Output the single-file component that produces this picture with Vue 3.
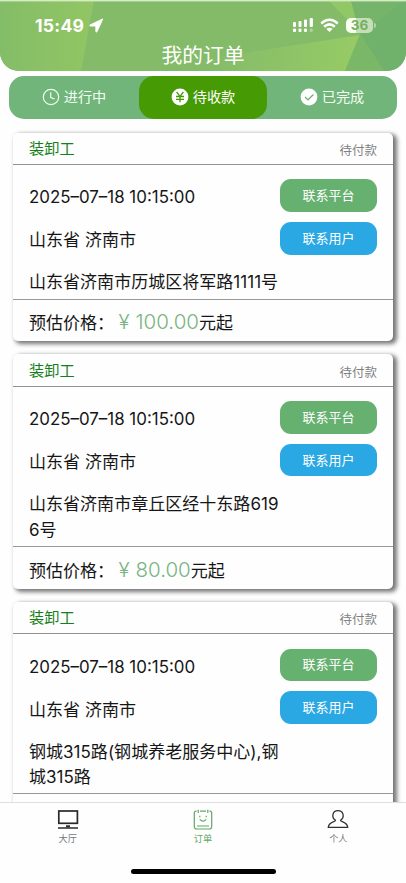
<script setup>
const orders = [
  { address: ['山东省济南市历城区将军路1111号'], price: '100.00' },
  { address: ['山东省济南市章丘区经十东路619', '6号'], price: '80.00' },
  { address: ['钢城315路(钢城养老服务中心),钢', '城315路'], price: '' },
]
</script>

<template>
  <div class="page">
    <header class="hero">
      <svg class="hero-bg" viewBox="0 0 406 71" preserveAspectRatio="none">
        <defs>
          <linearGradient id="leaf" x1="0" y1="0" x2="1" y2="0">
            <stop offset="0" stop-color="#84bd68" />
            <stop offset="1" stop-color="#92c663" />
          </linearGradient>
          <linearGradient id="ray" x1="0" y1="0" x2="1" y2="0">
            <stop offset="0" stop-color="#84bb69" />
            <stop offset="1" stop-color="#96cb65" />
          </linearGradient>
        </defs>
        <rect width="406" height="71" fill="#84bb69" />
        <path d="M0 0H94L81 71H0Z" fill="url(#leaf)" />
        <path d="M250 52L360 35L345 71H203V59Z" fill="url(#ray)" />
        <path d="M328 0H351L360 33Z" fill="#92c766" />
        <path d="M351 0H406V71H384L360 34Z" fill="#70b16b" />
        <path d="M351 0H406L360 34Z" fill="#75b46a" />
        <path d="M360 34L384 71H345Z" fill="#7ab867" />
        <rect width="406" height="1.4" fill="#d4edc4" />
      </svg>
      <div class="status">
        <div class="clock">
          <span class="time">15:49</span>
          <svg width="15" height="15" viewBox="0 0 15 15"><path d="M13.8.9L1 7Q.4 7.7 1.2 8H6.9V13.6Q7.3 14.6 7.9 13.8Z" fill="#fff" stroke="#fff" stroke-width="1" stroke-linejoin="round" /></svg>
        </div>
        <div class="signals">
          <svg width="22" height="16" viewBox="0 0 22 16" fill="#fff">
            <rect x="1" y="5" width="3" height="5" rx="1" /><rect x="6.5" y="4" width="3" height="6" rx="1" />
            <rect x="12" y="2.5" width="3" height="7.5" rx="1" /><rect x="17.7" y="1" width="3.2" height="9" rx="1" />
            <rect x="1" y="11.5" width="3" height="3.5" rx="1" /><rect x="6.5" y="11.5" width="3" height="3.5" rx="1" />
            <rect x="12" y="11.5" width="3" height="3.5" rx="1" /><rect x="17.7" y="11.5" width="3" height="3.5" rx="1" opacity=".35" />
          </svg>
          <svg width="19" height="15" viewBox="0 0 19 15" fill="none" stroke="#fff" stroke-width="2.5">
            <path d="M1.2 5.5Q9.5-1.9 17.8 5.5M4.1 8.8Q9.5 4 14.9 8.8" /><path d="M9.5 14L6.4 11Q9.5 8.5 12.6 11Z" fill="#fff" stroke="none" />
          </svg>
          <div class="battery"><span>36</span></div>
          <i class="battery-tip"></i>
        </div>
      </div>
      <h1>我的订单</h1>
    </header>

    <nav class="filters">
      <div class="filter">
        <svg width="18" height="18" viewBox="0 0 18 18" fill="none" stroke="#f2fff2" stroke-width="1.2"><circle cx="9" cy="9" r="7.7" /><path d="M8.7 4.2V9.6L12.6 11" /></svg>
        <span>进行中</span>
      </div>
      <div class="filter active">
        <svg width="18" height="18" viewBox="0 0 18 18"><circle cx="9" cy="9" r="8.4" fill="#fff" /><path d="M5.6 4L9 8.3L12.4 4M5 8.5H13M5 11.3H13M9 8.3V14.3" fill="none" stroke="#469a04" stroke-width="1.3" /></svg>
        <span>待收款</span>
      </div>
      <div class="filter">
        <svg width="18" height="18" viewBox="0 0 18 18"><circle cx="9" cy="9" r="8.4" fill="#fff" /><path d="M5 9L8 11.9L13.4 6.5" fill="none" stroke="#75ac78" stroke-width="1.3" /></svg>
        <span>已完成</span>
      </div>
    </nav>

    <main class="orders">
      <article v-for="(order, i) in orders" :key="i" class="card">
        <div class="card-head"><span class="job">装卸工</span><span class="state">待付款</span></div>
        <div class="card-body">
          <div class="details">
            <p class="date">2025–07–18 10:15:00</p>
            <p class="region">山东省 济南市</p>
            <p class="address"><span v-for="line in order.address" :key="line">{{ line }}</span></p>
          </div>
          <div class="actions"><button class="platform">联系平台</button><button class="user">联系用户</button></div>
        </div>
        <div class="card-foot">
          <template v-if="order.price"><span class="label">预估价格：</span><span class="yen">¥</span><span class="price">{{ order.price }}</span><span>元起</span></template>
        </div>
      </article>
    </main>

    <footer class="tabs">
      <div class="tab-row">
        <div class="tab">
          <svg width="22" height="22" viewBox="0 0 22 22" fill="none" stroke="#29292b"><rect x="1.8" y="2" width="18.6" height="12.3" stroke-width="1.7" /><path d="M1 19H21" stroke-width="1.5" /><path d="M9 17.3H13" stroke-width="2" /></svg>
          <span>大厅</span>
        </div>
        <div class="tab current">
          <svg width="22" height="22" viewBox="0 0 22 22" fill="none" stroke="#61a665" stroke-width="1.2"><path d="M4.5 2.2H4Q2.3 2.2 2.3 4V17.5Q2.3 20 4.7 20H17.3Q19.7 20 19.7 17.5V4Q19.7 2.2 18 2.2H17.5M8 2.2H14M6.2.7V4M15.8.7V4M5 17H17" /><path d="M7.8 6.7V8.2M14.2 6.7V8.2M7.8 10.3Q11 13.8 14.2 10.3" /></svg>
          <span>订单</span>
        </div>
        <div class="tab">
          <svg width="22" height="22" viewBox="0 0 22 22" fill="none" stroke="#303033" stroke-width="1.3"><path d="M8.5 11.4C4 8.2 5.5 1.7 11 1.7S18 8.2 13.5 11.4C13.2 13 20.2 12.4 20.7 18.4H1.3C1.8 12.4 8.8 13 8.5 11.4Z" /></svg>
          <span>个人</span>
        </div>
      </div>
      <div class="home-bar"></div>
    </footer>
  </div>
</template>

<style>
body { margin: 0; overflow: hidden; }
</style>

<style scoped>
* { box-sizing: border-box; }
.page { width: 406px; height: 883px; display: flex; flex-direction: column; overflow: hidden; background: #fefefe; font-family: Inter, "Noto Sans CJK SC", sans-serif; color: #161616; }
.hero { position: relative; height: 71px; flex: none; overflow: hidden; border-radius: 0 0 19px 19px; color: #fff; }
.hero-bg { position: absolute; inset: 0; width: 406px; height: 71px; }
.status { position: relative; display: flex; justify-content: space-between; height: 43px; padding: 9px 30px 0 35px; }
.clock { display: flex; align-items: center; gap: 5px; height: 33px; }
.time { font-size: 17.6px; font-weight: 700; letter-spacing: .25px; }
.signals { display: flex; align-items: center; height: 32px; }
.signals svg:nth-child(2) { margin-left: 6px; }
.battery { width: 27px; height: 15px; margin-left: 7px; border-radius: 5px; background: linear-gradient(90deg, #f7fff2 0 36%, #c4dfb5 36%); display: flex; justify-content: center; align-items: center; color: #7aae62; font-size: 13.5px; font-weight: 700; }
.battery-tip { width: 2px; height: 5px; margin-left: 1px; border-radius: 0 2px 2px 0; background: #b1d59f; }
h1 { position: relative; margin: 0; text-align: center; font-size: 20.8px; line-height: 26px; font-weight: 400; }
.filters { display: flex; flex: none; width: 388px; height: 43px; margin: 5px 9px 0; border-radius: 15px; overflow: hidden; background: #71b57b; }
.filter { flex: 1; display: flex; align-items: center; justify-content: center; gap: 4px; padding-bottom: 1px; color: #f3fff3; font-size: 14.2px; }
.filter span { padding-bottom: 2px; }
.filter.active { flex: none; width: 128px; border-radius: 15px; background: #469a04; color: #fff; }
.orders { flex: 1; min-height: 0; overflow: hidden; padding: 13.5px 13px 0; display: flex; flex-direction: column; gap: 13px; }
.card { flex: none; width: 380px; border-radius: 5px; background: #fefefe; box-shadow: 3px 2px 4px 1px #777; }
.card-head { display: flex; align-items: center; justify-content: space-between; height: 32.7px; padding: 0 16px 1px; border-bottom: 1px solid #929292; }
.job { font-size: 15.2px; color: #168018; padding-bottom: 1.5px; }
.state { font-size: 12.5px; color: #818181; padding-top: 3px; }
.card-body { display: flex; padding: 20.3px 16px 3.8px; border-bottom: 1px solid #999; }
.details { width: 251px; flex: none; font-size: 17.05px; line-height: 25.5px; white-space: nowrap; }
.details p { margin: 0 0 16.5px; }
.details p:last-child { margin: 0; }
.details .date { font-size: 16.9px; }
.address span { display: block; }
.actions { display: flex; flex-direction: column; gap: 10.5px; margin-top: -6px; }
button { width: 97px; height: 32.3px; padding: 0 0 2px; border: 0; border-radius: 11px; color: #fff; font: 13px Inter, "Noto Sans CJK SC", sans-serif; }
.platform { background: #66b16f; }
.user { background: #2aa8e3; }
.card-foot { display: flex; align-items: baseline; height: 41.5px; padding: 7.5px 16px 0; font-size: 17.05px; line-height: 30px; }
.label { width: 89.5px; }
.yen, .price { font-size: 20.5px; color: #78b481; font-weight: 300; }
.yen { width: 17px; }
.tabs { flex: none; height: 81px; border-top: 1px solid #dedede; background: #fefefe; display: flex; flex-direction: column; align-items: center; }
.tab-row { display: flex; width: 100%; height: 66px; padding-top: 6px; }
.tab { flex: 1; display: flex; flex-direction: column; align-items: center; font-size: 9.2px; line-height: 14px; color: #777; gap: 1px; }
.tab.current { color: #61a665; }
.home-bar { width: 145px; height: 5px; border-radius: 3px; background: #000; }
</style>
